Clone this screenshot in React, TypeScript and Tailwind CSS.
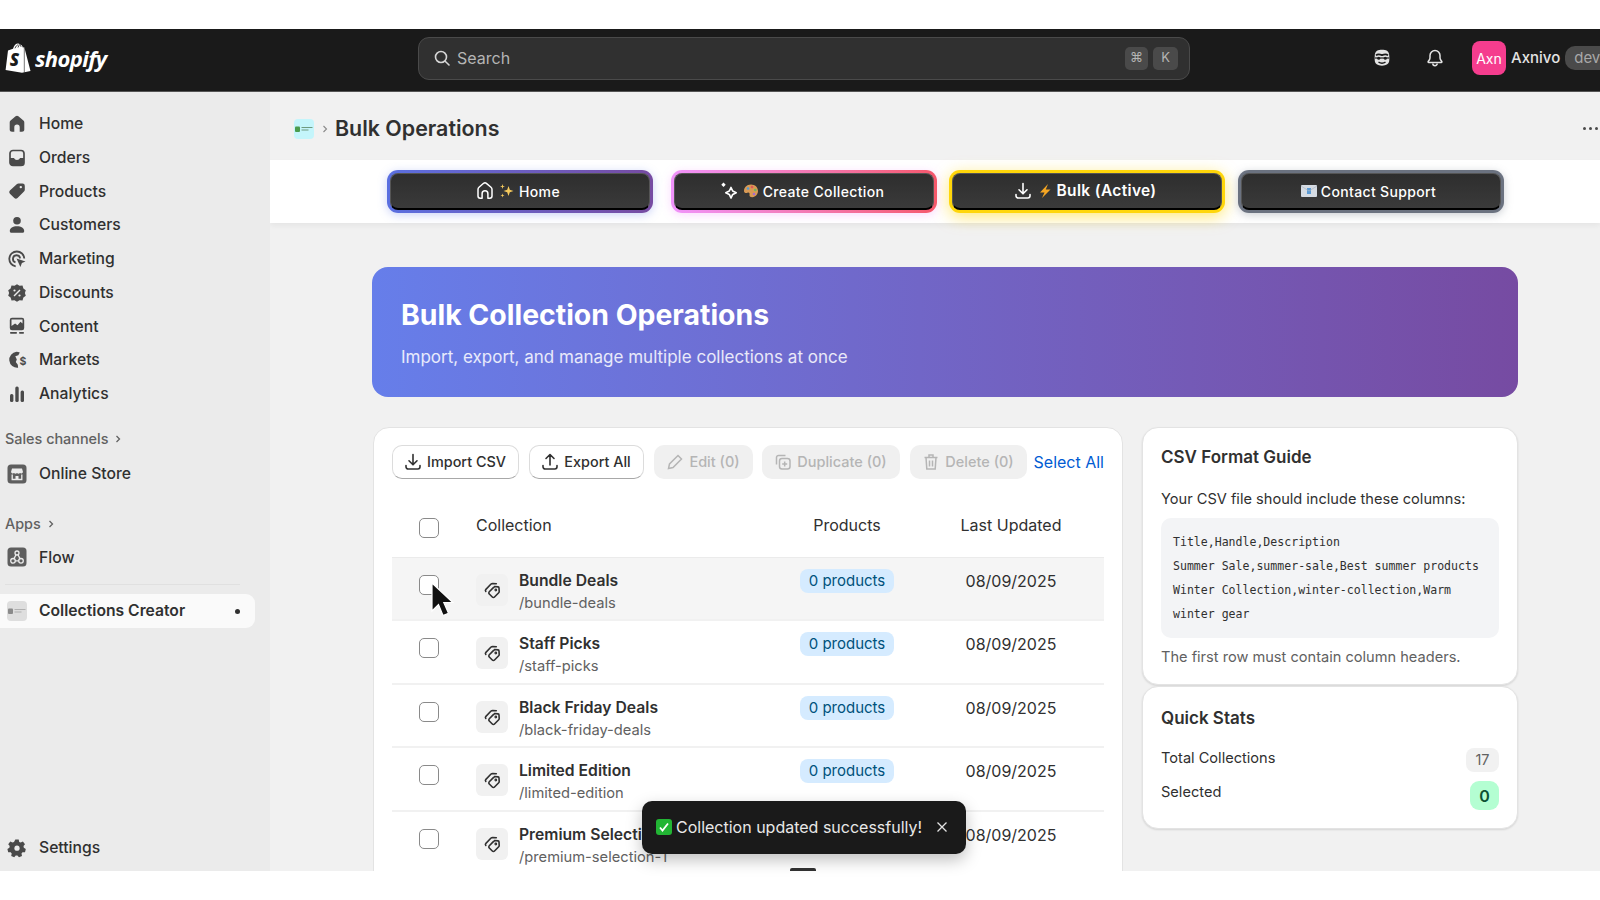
import React from "react";

const ink = "#4a4a4a";

function HomeIcon() {
  return (
    <svg viewBox="0 0 20 20" className="w-5 h-5" fill={ink}>
      <path d="M8.600 2.300a2.200 2.200 0 0 1 2.800 0l5 4.200c.6.500.9 1.200.9 1.900v7c0 1.300-1 2.300-2.300 2.300h-2.300v-4.400a2.700 2.700 0 0 0-5.400 0v4.400H5c-1.300 0-2.300-1-2.300-2.300v-7c0-.7.300-1.400.9-1.900z" />
    </svg>
  );
}

function OrdersIcon() {
  return (
    <svg viewBox="0 0 20 20" className="w-5 h-5">
      <rect x="3" y="2.500" width="14" height="15" rx="3" fill="none" stroke={ink} strokeWidth="1.700" />
      <path d="M3 10h4c.5 1.200 1.600 2 3 2s2.500-.8 3-2h4v4.500a3 3 0 0 1-3 3H6a3 3 0 0 1-3-3z" fill={ink} />
    </svg>
  );
}

function ProductsIcon() {
  return (
    <svg viewBox="0 0 20 20" className="w-5 h-5" fill={ink}>
      <path d="M11.500 2.500h4A2.300 2.300 0 0 1 17.800 4.800v4c0 .7-.3 1.300-.8 1.800l-6.500 6.500a2.300 2.300 0 0 1-3.200 0l-4.400-4.400a2.300 2.300 0 0 1 0-3.200l6.800-6.300c.5-.4 1.100-.7 1.800-.7zm2.300 4.800a1.200 1.200 0 1 0 0-2.400 1.200 1.200 0 0 0 0 2.400z" fillRule="evenodd" />
    </svg>
  );
}

function CustomersIcon() {
  return (
    <svg viewBox="0 0 20 20" className="w-5 h-5" fill={ink}>
      <circle cx="10" cy="5.800" r="3.800" />
      <path d="M2.800 16c0-3 3-4.800 7.200-4.800s7.200 1.800 7.200 4.800c0 1-.7 1.800-1.500 1.800H4.300c-.8 0-1.500-.8-1.500-1.800z" />
    </svg>
  );
}

function MarketingIcon() {
  return (
    <svg viewBox="0 0 20 20" className="w-5 h-5" fill="none" stroke={ink} strokeWidth="1.800">
      <path d="M8.700 17.400a7.500 7.500 0 1 1 8.600-7.900" />
      <path d="M8.500 13.300a3.600 3.600 0 1 1 4.600-4" />
      <path d="M9.500 9.500l9 3-3.600 1.400-1.500 4z" fill={ink} stroke="none" />
    </svg>
  );
}

function DiscountsIcon() {
  return (
    <svg viewBox="0 0 20 20" className="w-5 h-5">
      <path d="M10 1.200l2.500 1.600 3-.2.900 2.800 2.400 1.800-.9 2.800.9 2.800-2.400 1.800-.9 2.800-3-.2L10 18.800l-2.500-1.600-3 .2-.9-2.800-2.400-1.800.9-2.800-.9-2.800 2.400-1.800.9-2.800 3 .2z" fill={ink} />
      <path d="M7 13l6-6" stroke="#ebebeb" strokeWidth="1.500" />
      <circle cx="7.500" cy="7.500" r="1.100" fill="#ebebeb" />
      <circle cx="12.500" cy="12.500" r="1.100" fill="#ebebeb" />
    </svg>
  );
}

function ContentIcon() {
  return (
    <svg viewBox="0 0 20 20" className="w-5 h-5">
      <path d="M5 1.800h10A2.200 2.200 0 0 1 17.200 4v8a2.200 2.200 0 0 1-2.200 2.200H5A2.200 2.200 0 0 1 2.800 12V4A2.200 2.200 0 0 1 5 1.800z" fill={ink} />
      <path d="M4.500 3.500h11v4l-2-1.800-3 3.500-2.400-1.700-3.600 2.500z" fill="#ebebeb" />
      <rect x="3" y="16" width="7" height="1.700" rx=".8" fill={ink} />
      <rect x="12" y="16" width="5" height="1.700" rx=".8" fill={ink} />
    </svg>
  );
}

function MarketsIcon() {
  return (
    <svg viewBox="0 0 20 20" className="w-5 h-5">
      <path d="M9.500 1.800a8 8 0 0 1 3.300.7l-1.500 2.700-3 1 1.500 3.300-1 2.500 2 2.800.3 3a8 8 0 1 1-1.600-16z" fill={ink} />
      <text x="12.600" y="15" fontSize="10.500" fontWeight="700" fill={ink} className="[font-family:Inter,sans-serif]">$</text>
    </svg>
  );
}

function AnalyticsIcon() {
  return (
    <svg viewBox="0 0 20 20" className="w-5 h-5" fill={ink}>
      <rect x="3" y="10" width="3.400" height="8" rx="1.500" />
      <rect x="8.300" y="2.500" width="3.400" height="15.500" rx="1.500" />
      <rect x="13.600" y="6.500" width="3.400" height="11.500" rx="1.500" />
    </svg>
  );
}

function SettingsIcon() {
  return (
    <svg viewBox="0 0 20 20" className="w-5 h-5">
      <path d="M8.300 1.500h3.400l.5 2.400 1.500.7 2.200-1.100 2.100 2.700-1.500 1.800.3 1.700 2 1.300-.8 3.200-2.500.1-1 1.300.5 2.300-3 1.400-1.600-1.900h-1.700l-1.500 1.900-3-1.400.5-2.300-1-1.300-2.500-.1-.8-3.200 2-1.300.3-1.700-1.500-1.800 2.100-2.700 2.200 1.100 1.500-.7z" fill={ink} />
      <circle cx="10" cy="10.200" r="2.600" fill="#ebebeb" />
    </svg>
  );
}

function StoreIcon() {
  return (
    <svg viewBox="0 0 20 20" className="w-5 h-5">
      <rect x="0.500" y="0.500" width="19" height="19" rx="3.500" fill="#5e5e5e" />
      <path d="M5 4.500h10l1 3.500a1.800 1.800 0 0 1-3 1 2.200 2.200 0 0 1-3 0 2.200 2.200 0 0 1-3 0 1.800 1.800 0 0 1-3-1z" fill="#ebebeb" />
      <path d="M5.200 10.500v5h9.600v-5" fill="none" stroke="#ebebeb" strokeWidth="1.300" />
      <rect x="8.500" y="12" width="3" height="3.500" fill="#ebebeb" />
    </svg>
  );
}

function FlowIcon() {
  return (
    <svg viewBox="0 0 20 20" className="w-5 h-5" fill="none" stroke="#ebebeb" strokeWidth="1.300">
      <rect x="0.500" y="0.500" width="19" height="19" rx="3.500" fill="#5e5e5e" stroke="none" />
      <circle cx="10" cy="6" r="2" />
      <circle cx="6" cy="13.800" r="2.300" />
      <circle cx="14" cy="13.800" r="2.300" />
      <path d="M9 7.800l-2 3.800M11 7.800l2 3.800M8.300 13.800h3.400" />
    </svg>
  );
}

function AppMark({ tint }: { tint: "cyan" | "gray" }) {
  return (
    <svg viewBox="0 0 20 20" className="w-5 h-5">
      <rect width="20" height="20" rx="4" fill={tint === "cyan" ? "#c4f5fb" : "#dedede"} />
      <rect x="1" y="7.500" width="5" height="5.500" rx="1" fill={tint === "cyan" ? "#4a9c4e" : "#8a8a8a"} />
      <rect x="7.500" y="8" width="11" height="1" fill={tint === "cyan" ? "#6f9a80" : "#b0b0b0"} />
      <rect x="7.500" y="10.500" width="7" height="1" fill={tint === "cyan" ? "#6f9a80" : "#b0b0b0"} />
    </svg>
  );
}

function ShopifyBag() {
  return (
    <svg viewBox="0 0 26 30" className="w-[26px] h-[30px]">
      <path d="M3 7.500l5-1.700C9 2.500 11 .6 13 .6c.8 0 1.400.4 1.800 1 1.500 0 2.500 1.300 3 3l1.500-.4L25.500 28 17 29.800 .6 27z" fill="#fff" />
      <path d="M10 5.300c.7-2 2-3.400 3.300-3.500M13 4.500c.3-1.200.9-2.200 1.800-2.900M16 3.800c0-.7-.4-1.600-1.200-2.200" fill="none" stroke="#1a1a1a" strokeWidth=".8" />
      <path d="M19.300 4.200v25.400" stroke="#1a1a1a" strokeWidth=".6" />
      <text x="4.700" y="23" fontSize="17" fontWeight="800" fill="#1a1a1a" fontStyle="italic" className="[font-family:'Open_Sans',sans-serif]">S</text>
    </svg>
  );
}

function Mascot() {
  return (
    <svg viewBox="0 0 20 20" className="w-5 h-5">
      <path d="M5 2.800c2.500-1.300 7.500-1.300 10 0 1.600.9 2.300 3 2.300 5.700v3.500c0 3.700-3 5.700-7.300 5.700s-7.300-2-7.300-5.700V8.500c0-2.700.7-4.800 2.300-5.700z" fill="#e3e3e3" />
      <path d="M4 7.300c2-1.800 4-1 6-.2 2-.8 4-1.600 6 .2" fill="none" stroke="#1a1a1a" strokeWidth="1.700" />
      <path d="M3 10h14" stroke="#1a1a1a" strokeWidth="1.200" />
      <circle cx="6.700" cy="10.300" r="1.500" fill="#1a1a1a" />
      <circle cx="13.300" cy="10.300" r="1.500" fill="#1a1a1a" />
      <path d="M6.500 14.200c2 1.200 5 1.200 7 0" fill="none" stroke="#1a1a1a" strokeWidth="1.400" />
    </svg>
  );
}

function Bell() {
  return (
    <svg viewBox="0 0 20 20" className="w-5 h-5" fill="none" stroke="#e3e3e3" strokeWidth="1.500" strokeLinejoin="round">
      <path d="M10 2.500a5 5 0 0 0-5 5v2.300c0 1-.3 1.700-.9 2.500l-.9 1.200c-.3.400 0 1 .5 1h12.600c.5 0 .8-.6.500-1l-.9-1.200c-.6-.8-.9-1.500-.9-2.500V7.500a5 5 0 0 0-5-5z" />
      <path d="M7.800 15.500a2.200 2.200 0 0 0 4.400 0" />
    </svg>
  );
}

function SearchIcon() {
  return (
    <svg viewBox="0 0 20 20" className="w-5 h-5" fill="none" stroke="#d6d6d6" strokeWidth="1.600" strokeLinecap="round">
      <circle cx="9" cy="9" r="5.500" />
      <path d="M13.200 13.200l3.800 3.800" />
    </svg>
  );
}

function DownloadIcon({ color, size }: { color: string; size: string }) {
  return (
    <svg viewBox="0 0 20 20" className={size} fill="none" stroke={color} strokeWidth="1.600" strokeLinecap="round" strokeLinejoin="round">
      <path d="M10 2.500v10M6 8.800l4 4 4-4" />
      <path d="M3 13.500v1.300a2.200 2.200 0 0 0 2.200 2.200h9.600a2.200 2.200 0 0 0 2.200-2.200v-1.300" />
    </svg>
  );
}

function UploadIcon({ color, size }: { color: string; size: string }) {
  return (
    <svg viewBox="0 0 20 20" className={size} fill="none" stroke={color} strokeWidth="1.600" strokeLinecap="round" strokeLinejoin="round">
      <path d="M10 13V2.800M6 6.500l4-4 4 4" />
      <path d="M3 13.500v1.300a2.200 2.200 0 0 0 2.200 2.200h9.600a2.200 2.200 0 0 0 2.200-2.200v-1.300" />
    </svg>
  );
}

function TabHome() {
  return (
    <svg viewBox="0 0 20 20" className="w-5 h-5" fill="none" stroke="#fff" strokeWidth="1.500" strokeLinejoin="round">
      <path d="M8.600 2.300a2.200 2.200 0 0 1 2.800 0l4.600 3.900c.7.600 1 1.300 1 2.200v6.600c0 1.300-1 2.200-2.200 2.200h-1.900v-4.500a2.900 2.900 0 0 0-5.800 0v4.500H5.200c-1.200 0-2.200-.9-2.200-2.200V8.400c0-.9.300-1.600 1-2.200z" />
    </svg>
  );
}

function TabCreate() {
  return (
    <svg viewBox="0 0 20 20" className="w-5 h-5">
      <path d="M4.500 1.500l2.200 2.200-2.200 2.200-2.200-2.200z" fill="#fff" />
      <path d="M12 6.500l1.700 3.500 3.500 1.700-3.500 1.700-1.700 3.600-1.700-3.600-3.500-1.700 3.500-1.700z" fill="none" stroke="#fff" strokeWidth="1.700" strokeLinejoin="round" />
    </svg>
  );
}

function Sparkle() {
  return (
    <svg viewBox="0 0 16 16" className="w-4 h-4" fill="#f4c95d">
      <path d="M9.500 3l1.300 3.700L14.500 8l-3.700 1.300L9.500 13 8.200 9.300 4.500 8l3.700-1.300z" />
      <path d="M3.500 1l.6 1.900L6 3.500l-1.900.6L3.500 6l-.6-1.900L1 3.500l1.900-.6zM3.500 10.500l.5 1.500 1.500.5-1.500.5-.5 1.500-.5-1.500-1.500-.5 1.500-.5z" />
    </svg>
  );
}

function Palette() {
  return (
    <svg viewBox="0 0 16 16" className="w-4 h-4">
      <path d="M8 1.500C3.500 1.500 1 4.500 1 8c0 2 2 2.500 3.500 1.800 1.500-.7 2.500.5 2 2-.4 1.500 1 2.700 3 2.500 3-.4 5.500-3 5.500-6.300 0-3.700-3-6.500-7-6.500z" fill="#d99a55" />
      <circle cx="5" cy="5.500" r="1.300" fill="#4f9ad6" />
      <circle cx="9" cy="4" r="1.300" fill="#e05a5a" />
      <circle cx="12.300" cy="7" r="1.300" fill="#6cb85c" />
      <circle cx="11" cy="11" r="1.300" fill="#a66bd0" />
    </svg>
  );
}

function Bolt() {
  return (
    <svg viewBox="0 0 16 16" className="w-4 h-4">
      <path d="M11 1L3 9.500h4.500L5 15l8.500-8.500H8.800z" fill="#f5a623" />
    </svg>
  );
}

function Envelope() {
  return (
    <svg viewBox="0 0 16 12" className="w-4 h-3">
      <rect width="16" height="12" rx="1" fill="#d5dbe3" />
      <rect x="6" y="3" width="4" height="6" fill="#5b9bd5" />
      <path d="M0 1l8 5 8-5" fill="none" stroke="#aeb8c4" strokeWidth=".7" />
    </svg>
  );
}

function CollectionIcon() {
  return (
    <svg viewBox="0 0 20 20" className="w-5 h-5" fill="none" stroke="#303030" strokeWidth="1.600" strokeLinejoin="round" strokeLinecap="round">
      <path d="M12.500 6.500l3.500.4c.6.100 1 .5 1 1.100l.2 3.500c0 .5-.2 1-.5 1.300l-4.200 4.200c-.6.600-1.600.6-2.200 0l-3-3c-.6-.6-.6-1.600 0-2.200l4.300-4.400c.3-.3.600-.4.900-.4z" />
      <circle cx="13.800" cy="10" r=".6" />
      <path d="M3.800 11.500c-.5-.6-.5-1.500.1-2.100l4.900-5.100c.5-.5 1.200-.8 1.900-.8l3.600.3" />
    </svg>
  );
}

function Checkbox() {
  return <span className="block w-5 h-5 rounded-[5px] border border-[#8a8a8a] bg-white" />;
}

function NavItem({ icon, label }: { icon: React.ReactNode; label: string }) {
  return (
    <div className="flex items-center h-[33.75px] pl-[7px] gap-3 text-[15.700px] font-medium text-[#303030]">
      <span className="w-5 h-5 flex shrink-0">{icon}</span>
      <span>{label}</span>
    </div>
  );
}

function SectionLabel({ text }: { text: string }) {
  return (
    <div className="flex items-center h-6 pl-[5px] gap-[5px] text-[14.400px] font-medium text-[#616161]">
      <span>{text}</span>
      <svg viewBox="0 0 10 10" className="w-[10px] h-[10px]" fill="none" stroke="#616161" strokeWidth="1.300">
        <path d="M3.500 2l3 3-3 3" />
      </svg>
    </div>
  );
}

function Kbd({ text, width }: { text: string; width: string }) {
  return (
    <span className={`flex items-center justify-center h-[23px] rounded-[5px] bg-[#4a4a4a] text-[13px] text-[#b5b5b5] ${width}`}>
      {text}
    </span>
  );
}

function Tab({
  ring,
  width,
  margin,
  strong,
  children,
}: {
  ring: string;
  width: string;
  margin: string;
  strong?: boolean;
  children: React.ReactNode;
}) {
  return (
    <div className={`rounded-[11px] p-[3px] h-[43px] ${ring} ${width} ${margin}`}>
      <div
        className={`h-full rounded-[8px] flex items-center justify-center gap-[4px] pr-[5px] bg-gradient-to-b from-[#2e2e2e] to-[#3a3a3a] border border-[#555] border-b-2 border-b-black text-white tracking-[0.35px] ${
          strong ? "text-[15.500px] font-semibold" : "text-[14px] font-medium"
        }`}
      >
        {children}
      </div>
    </div>
  );
}

function ToolButton({ icon, label, width }: { icon: React.ReactNode; label: string; width: string }) {
  return (
    <div
      className={`h-[34px] flex items-center justify-center gap-[4px] pr-[2px] rounded-[10px] bg-white border border-[#dcdcdc] border-b-[#a8a8a8] text-[14.400px] font-medium text-[#303030] ${width}`}
    >
      {icon}
      <span>{label}</span>
    </div>
  );
}

function DisabledButton({ icon, label, width }: { icon: React.ReactNode; label: string; width: string }) {
  return (
    <div
      className={`h-[34px] flex items-center justify-center gap-[4px] pr-[2px] rounded-[10px] bg-[#f0f0f0] text-[14.500px] font-medium text-[#b5b5b5] ${width}`}
    >
      {icon}
      <span>{label}</span>
    </div>
  );
}

const collections = [
  { name: "Bundle Deals", slug: "/bundle-deals" },
  { name: "Staff Picks", slug: "/staff-picks" },
  { name: "Black Friday Deals", slug: "/black-friday-deals" },
  { name: "Limited Edition", slug: "/limited-edition" },
  { name: "Premium Selection", slug: "/premium-selection-1" },
];

function Row({ name, slug, active }: { name: string; slug: string; active: boolean }) {
  return (
    <div
      className={`grid grid-cols-[84px_300px_142px_186px] h-[63.400px] border-b-2 border-[#f1f1f1] ${
        active ? "bg-[#f5f5f5]" : "bg-white"
      }`}
    >
      <div className="pl-[27px] pt-[17px]">
        <Checkbox />
      </div>
      <div className="flex gap-[11px] pt-[11px]">
        <span className="w-8 h-8 mt-[5px] rounded-[6px] bg-[#f1f1f1] flex items-center justify-center shrink-0">
          <CollectionIcon />
        </span>
        <div>
          <div className="text-[15.700px] leading-[24px] font-semibold text-[#303030] whitespace-nowrap">{name}</div>
          <div className="text-[14.700px] leading-[20px] text-[#616161] whitespace-nowrap">{slug}</div>
        </div>
      </div>
      <div className="flex justify-center pt-[11px]">
        <span className="h-6 px-[9px] flex items-center rounded-[8px] bg-[#d5ebff] text-[15px] text-[#00527c]">
          0 products
        </span>
      </div>
      <div className="text-center pt-[11px] text-[16px] leading-[24px] text-[#303030]">08/09/2025</div>
    </div>
  );
}

export default function App() {
  return (
    <div className="relative w-[1600px] h-[900px] overflow-hidden bg-white flex flex-col [font-family:Inter,sans-serif]">
      <div className="h-[29px] shrink-0 bg-white" />

      <header className="h-[63px] shrink-0 bg-[#1a1a1a] border-b border-[#555] flex items-center pb-[4px]">
        <div className="w-[418px] shrink-0 flex items-center pl-[5px] gap-[4px]">
          <ShopifyBag />
          <span className="[font-family:'Open_Sans',sans-serif] italic font-bold text-[22px] tracking-[-0.6px] text-white">
            shopify
          </span>
        </div>
        <div className="w-[772px] h-[43px] shrink-0 rounded-[11px] bg-[#303030] border border-[#4a4a4a] flex items-center pl-[13px] pr-[11px] gap-[5px]">
          <SearchIcon />
          <span className="text-[16px] text-[#b5b5b5]">Search</span>
          <div className="ml-auto flex gap-[5px]">
            <Kbd text="⌘" width="w-[23px]" />
            <Kbd text="K" width="w-[25px]" />
          </div>
        </div>
        <div className="ml-[182px] flex items-center gap-[33px] shrink-0">
          <Mascot />
          <Bell />
        </div>
        <div className="ml-[27px] w-[34px] h-[34px] shrink-0 rounded-[8px] bg-[#f53d8e] flex items-center justify-center text-[14px] text-white">
          Axn
        </div>
        <span className="ml-[5px] text-[15px] font-medium text-[#e3e3e3] shrink-0">Axnivo</span>
        <span className="ml-[5px] h-6 pl-[9px] pr-[8px] rounded-l-[10px] bg-[#4a4a4a] flex items-center text-[15px] text-[#a8a8a8] shrink-0">
          dev
        </span>
      </header>

      <div className="flex flex-1 min-h-0">
        <aside className="w-[270px] shrink-0 bg-[#ebebeb] flex flex-col pt-[15px]">
          <NavItem icon={<HomeIcon />} label="Home" />
          <NavItem icon={<OrdersIcon />} label="Orders" />
          <NavItem icon={<ProductsIcon />} label="Products" />
          <NavItem icon={<CustomersIcon />} label="Customers" />
          <NavItem icon={<MarketingIcon />} label="Marketing" />
          <NavItem icon={<DiscountsIcon />} label="Discounts" />
          <NavItem icon={<ContentIcon />} label="Content" />
          <NavItem icon={<MarketsIcon />} label="Markets" />
          <NavItem icon={<AnalyticsIcon />} label="Analytics" />
          <div className="mt-[16px]">
            <SectionLabel text="Sales channels" />
          </div>
          <div className="mt-[6px]">
            <NavItem icon={<StoreIcon />} label="Online Store" />
          </div>
          <div className="mt-[21px]">
            <SectionLabel text="Apps" />
          </div>
          <div className="mt-[5px]">
            <NavItem icon={<FlowIcon />} label="Flow" />
          </div>
          <div className="mt-[10px] mx-[5px] w-[235px] border-t border-[#e0e0e0]" />
          <div className="mt-[9px] w-[255px] h-[34px] rounded-r-[9px] bg-[#fafafa] flex items-center pl-[7px] gap-3 text-[15.700px] font-semibold text-[#303030]">
            <AppMark tint="gray" />
            <span>Collections Creator</span>
            <span className="ml-auto mr-[15px] w-[5px] h-[5px] rounded-full bg-[#303030]" />
          </div>
          <div className="mt-auto mb-[6px]">
            <NavItem icon={<SettingsIcon />} label="Settings" />
          </div>
        </aside>

        <main className="flex-1 min-w-0 bg-[#f1f1f1] flex flex-col overflow-hidden">
          <div className="h-[68px] shrink-0 flex items-center pl-[24px] pr-[2px] pt-[5px]">
            <AppMark tint="cyan" />
            <svg viewBox="0 0 10 10" className="w-[10px] h-[10px] ml-[6px]" fill="none" stroke="#8a8a8a" strokeWidth="1.100">
              <path d="M3.500 2l3 3-3 3" />
            </svg>
            <h1 className="ml-[5px] text-[21.400px] font-semibold text-[#303030]">Bulk Operations</h1>
            <div className="ml-auto flex gap-[2.500px]">
              <span className="w-[3.500px] h-[3.500px] rounded-full bg-[#4a4a4a]" />
              <span className="w-[3.500px] h-[3.500px] rounded-full bg-[#4a4a4a]" />
              <span className="w-[3.500px] h-[3.500px] rounded-full bg-[#4a4a4a]" />
            </div>
          </div>

          <div className="h-[63px] shrink-0 bg-white shadow-[0_3px_6px_rgba(0,0,0,0.05)] flex items-center pl-[117px]">
            <Tab
              ring="bg-gradient-to-r from-[#5a6fe0] to-[#764ba2] shadow-[0_2px_10px_rgba(102,126,234,0.35)]"
              width="w-[266px]"
              margin=""
            >
              <TabHome />
              <Sparkle />
              <span>Home</span>
            </Tab>
            <Tab
              ring="bg-gradient-to-r from-[#f093fb] to-[#f5576c] shadow-[0_2px_10px_rgba(240,147,251,0.35)]"
              width="w-[266px]"
              margin="ml-[18px]"
            >
              <TabCreate />
              <Palette />
              <span>Create Collection</span>
            </Tab>
            <Tab
              ring="bg-[#ffd60a] shadow-[0_4px_16px_rgba(255,214,10,0.55)]"
              width="w-[276px]"
              margin="ml-[12px]"
              strong
            >
              <DownloadIcon color="#fff" size="w-5 h-5" />
              <Bolt />
              <span>Bulk (Active)</span>
            </Tab>
            <Tab
              ring="bg-[#6b7280] shadow-[0_2px_8px_rgba(107,114,128,0.35)]"
              width="w-[266px]"
              margin="ml-[13px]"
            >
              <Envelope />
              <span>Contact Support</span>
            </Tab>
          </div>

          <section className="mt-[44px] ml-[102px] w-[1146px] h-[130px] shrink-0 rounded-[16px] bg-gradient-to-r from-[#667eea] to-[#764ba2] pl-[29px] pt-[28px] text-white">
            <h2 className="text-[28.400px] leading-[40px] font-bold">Bulk Collection Operations</h2>
            <p className="mt-[10px] text-[17px] leading-[24px] text-white/85">
              Import, export, and manage multiple collections at once
            </p>
          </section>

          <div className="mt-[30px] ml-[103px] flex gap-[19px] items-start">
            <div className="w-[750px] h-[460px] shrink-0 rounded-t-[16px] bg-white border border-[#e3e3e3] px-[18px] pt-[17px]">
              <div className="flex items-center">
                <ToolButton icon={<DownloadIcon color="#303030" size="w-5 h-5" />} label="Import CSV" width="w-[127px]" />
                <div className="ml-[10px]">
                  <ToolButton icon={<UploadIcon color="#303030" size="w-5 h-5" />} label="Export All" width="w-[115px]" />
                </div>
                <div className="ml-[10px]">
                  <DisabledButton
                    icon={
                      <svg viewBox="0 0 20 20" className="w-5 h-5" fill="none" stroke="#b5b5b5" strokeWidth="1.500">
                        <path d="M13 3.500l3.500 3.500L8 15.500l-4.500 1 1-4.500z" />
                      </svg>
                    }
                    label="Edit (0)"
                    width="w-[99px]"
                  />
                </div>
                <div className="ml-[9px]">
                  <DisabledButton
                    icon={
                      <svg viewBox="0 0 20 20" className="w-5 h-5" fill="none" stroke="#b5b5b5" strokeWidth="1.500">
                        <rect x="6.500" y="6.500" width="10.500" height="10.500" rx="2.500" />
                        <path d="M3.500 12.500V5.500a2 2 0 0 1 2-2h7M11.700 9.500v5M9.200 12h5" />
                      </svg>
                    }
                    label="Duplicate (0)"
                    width="w-[138px]"
                  />
                </div>
                <div className="ml-[10px]">
                  <DisabledButton
                    icon={
                      <svg viewBox="0 0 20 20" className="w-5 h-5" fill="none" stroke="#b5b5b5" strokeWidth="1.500">
                        <path d="M3.500 5.500h13M8 5.500V3h4v2.500M5 5.500l.8 11.500h8.400L15 5.500M8.500 8.500v6M11.500 8.500v6" />
                      </svg>
                    }
                    label="Delete (0)"
                    width="w-[117px]"
                  />
                </div>
                <span className="ml-auto text-[16px] text-[#005bd3]">Select All</span>
              </div>

              <div className="mt-[21px] grid grid-cols-[84px_300px_142px_186px] h-[58px] border-b border-[#ebebeb] text-[16px] text-[#303030]">
                <div className="pl-[27px] pt-[18px]">
                  <Checkbox />
                </div>
                <div className="pt-[13px] leading-[24px]">Collection</div>
                <div className="pt-[13px] leading-[24px] text-center">Products</div>
                <div className="pt-[13px] leading-[24px] text-center">Last Updated</div>
              </div>

              {collections.map((item, index) => (
                <Row key={item.slug} name={item.name} slug={item.slug} active={index === 0} />
              ))}
            </div>

            <div className="w-[376px] shrink-0 flex flex-col gap-[1px]">
              <div className="h-[258px] rounded-[16px] bg-white border border-[#e3e3e3] shadow-[0_1px_2px_rgba(0,0,0,0.12)] px-[18px] pt-[17px]">
                <h3 className="text-[17px] leading-[24px] font-semibold text-[#303030]">CSV Format Guide</h3>
                <p className="mt-[18px] text-[14.600px] leading-[24px] text-[#303030]">
                  Your CSV file should include these columns:
                </p>
                <div className="mt-[7px] h-[120px] rounded-[10px] bg-[#f3f4f6] pl-[12px] pt-[12px] [font-family:'DejaVu_Sans_Mono',monospace] text-[11.550px] leading-[24px] text-[#303030]">
                  <div>Title,Handle,Description</div>
                  <div>Summer Sale,summer-sale,Best summer products</div>
                  <div>Winter Collection,winter-collection,Warm</div>
                  <div>winter gear</div>
                </div>
                <p className="mt-[7px] text-[14.600px] leading-[24px] text-[#616161]">
                  The first row must contain column headers.
                </p>
              </div>

              <div className="h-[143px] rounded-[16px] bg-white border border-[#e3e3e3] shadow-[0_1px_2px_rgba(0,0,0,0.12)] px-[18px] pt-[19px]">
                <h3 className="text-[17px] leading-[24px] font-semibold text-[#303030]">Quick Stats</h3>
                <div className="mt-[17px] flex justify-between h-[34px]">
                  <span className="text-[14.600px] leading-[22px] text-[#303030]">Total Collections</span>
                  <span className="w-[33px] h-6 mt-[1px] rounded-[8px] bg-[#f1f1f1] flex items-center justify-center text-[14.500px] text-[#616161]">
                    17
                  </span>
                </div>
                <div className="flex justify-between">
                  <span className="text-[14.600px] leading-[22px] text-[#303030]">Selected</span>
                  <span className="w-[29px] h-[29px] rounded-[9px] bg-[#b4fed2] flex items-center justify-center text-[16px] font-semibold text-[#0c5132]">
                    0
                  </span>
                </div>
              </div>
            </div>
          </div>
        </main>
      </div>

      <div className="h-[29px] shrink-0 bg-white relative z-10" />

      <div className="absolute left-[642px] top-[801px] z-20 w-[324px] h-[53px] rounded-[10px] bg-[#1a1a1a] shadow-[0_6px_16px_rgba(0,0,0,0.25)] flex items-center pl-[14px] pb-[1px] gap-[4px] text-[16px] text-[#e8e8e8]">
        <svg viewBox="0 0 16 16" className="w-4 h-4 shrink-0">
          <rect width="16" height="16" rx="3" fill="#22b534" />
          <path d="M4 8.500l2.500 3L12 4.500" fill="none" stroke="#fff" strokeWidth="1.800" />
        </svg>
        <span className="whitespace-nowrap">Collection updated successfully!</span>
        <svg viewBox="0 0 12 12" className="ml-[10px] w-3 h-3" fill="none" stroke="#e3e3e3" strokeWidth="1.300">
          <path d="M1.500 1.500l9 9M10.500 1.500l-9 9" />
        </svg>
      </div>

      <div className="absolute left-[790px] top-[868px] z-20 w-[26px] h-[3px] rounded-t-[2px] bg-[#303030]" />

      <svg viewBox="0 0 24 36" className="absolute left-[430px] top-[582px] z-30 w-[24px] h-[36px]">
        <path d="M2 1v28l6.500-6.500 4.500 11 5.500-2.300-4.700-10.700h9z" fill="#111" stroke="#fff" strokeWidth="1.200" />
      </svg>
    </div>
  );
}
